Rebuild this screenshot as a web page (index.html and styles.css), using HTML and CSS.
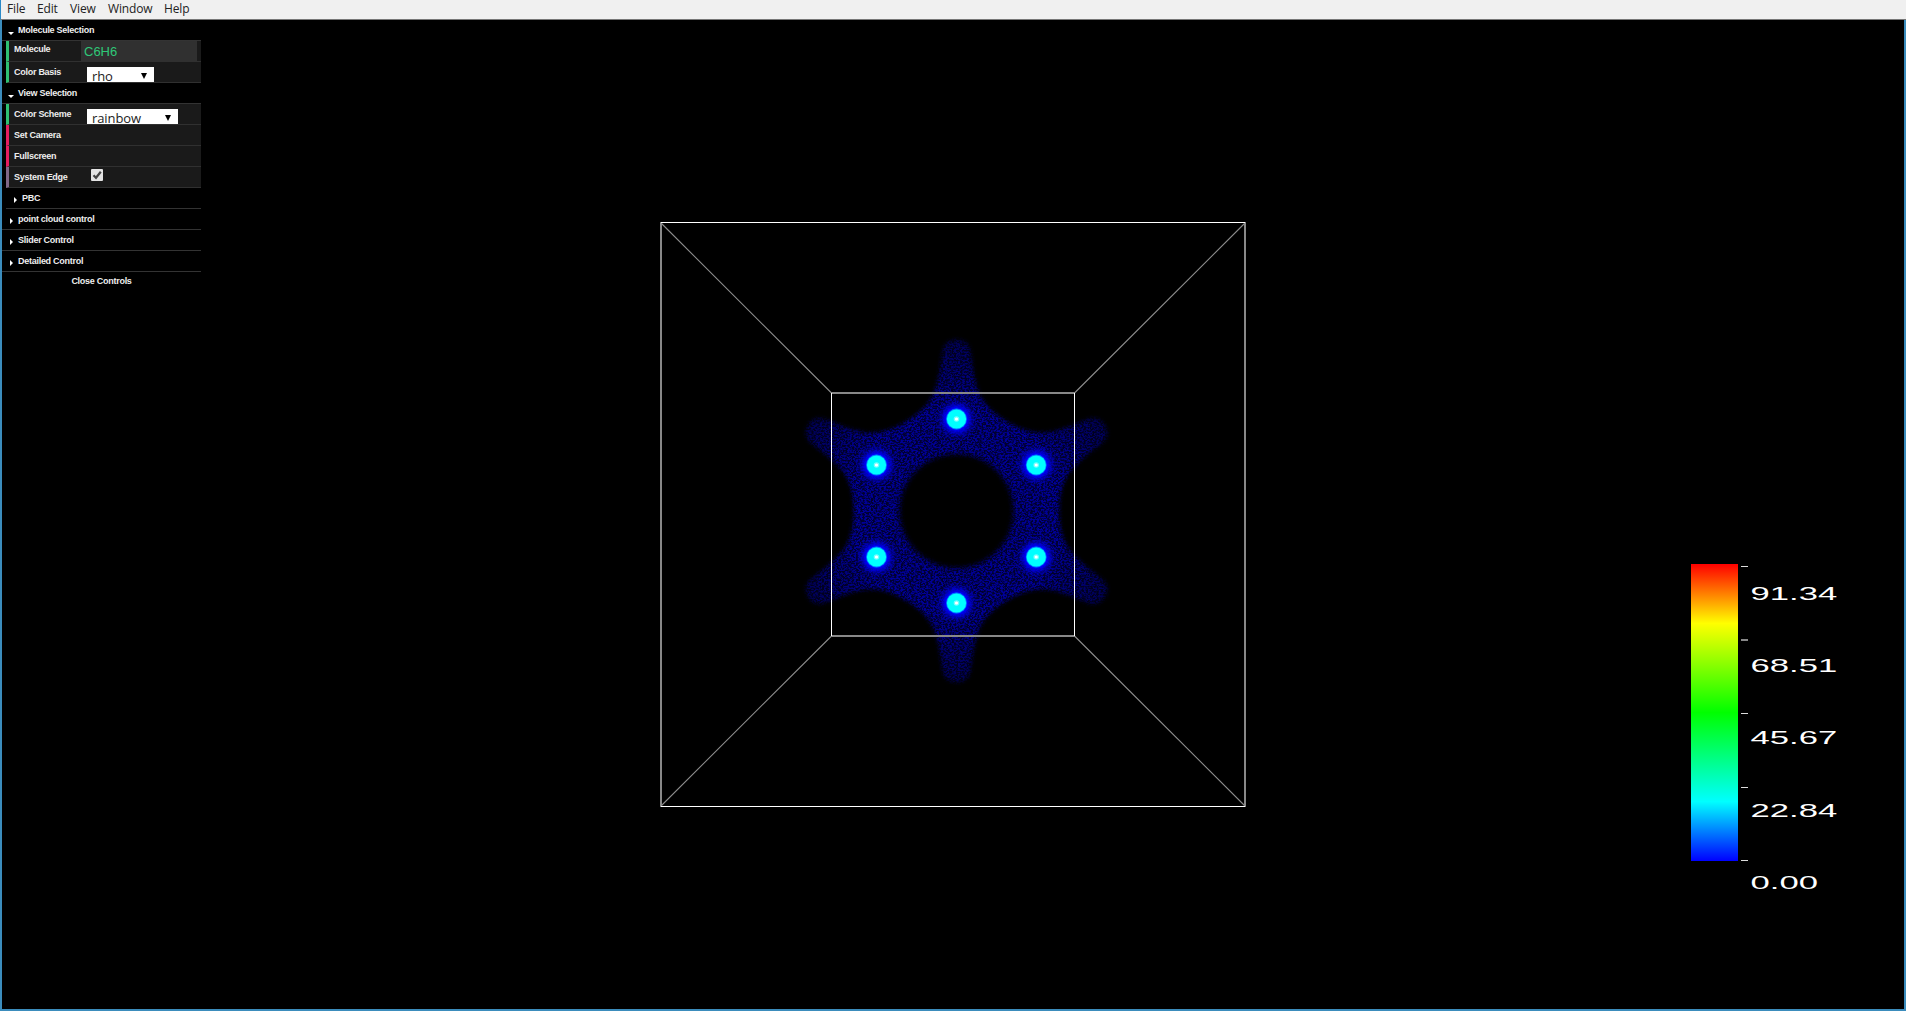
FILE: index.html
```html
<!DOCTYPE html>
<html lang="en">
<head>
<meta charset="utf-8">
<title>Molecule viewer</title>
<link rel="stylesheet" href="styles.css">
</head>
<body>
<nav class="menubar"><span class="m-file">File</span><span class="m-edit">Edit</span><span class="m-view">View</span><span class="m-window">Window</span><span class="m-help">Help</span></nav>
<main class="viewport">
<svg class="scene" viewBox="0 19 1906 992" width="1906" height="992">
  <defs>
    <linearGradient id="rainbow" x1="0" y1="0" x2="0" y2="1">
      <stop offset="0" stop-color="#f00"/><stop offset=".2" stop-color="#ff0"/><stop offset=".5" stop-color="#0f0"/><stop offset=".8" stop-color="#0ff"/><stop offset="1" stop-color="#00f"/>
    </linearGradient>
    <radialGradient id="density" gradientUnits="userSpaceOnUse" cx="0" cy="0" r="172">
      <stop offset=".3" stop-color="#00005c"/><stop offset=".6" stop-color="#000060"/><stop offset=".8" stop-color="#000048"/><stop offset="1" stop-color="#000034"/>
    </radialGradient>
    <radialGradient id="glow">
      <stop offset=".4" stop-color="#0028ff"/><stop offset=".52" stop-color="#0000ff" stop-opacity=".95"/><stop offset=".68" stop-color="#0000e8" stop-opacity=".6"/><stop offset=".84" stop-color="#0000c0" stop-opacity=".25"/><stop offset="1" stop-color="#0000a0" stop-opacity="0"/>
    </radialGradient>
    <filter id="grain" filterUnits="userSpaceOnUse" x="-190" y="-190" width="380" height="380" color-interpolation-filters="sRGB">
      <feGaussianBlur in="SourceGraphic" stdDeviation="2.4" result="soft"/>
      <feTurbulence type="fractalNoise" baseFrequency=".47 .61" numOctaves="3" seed="7"/>
      <feColorMatrix values="0 0 0 0 0  0 0 0 0 0  0 0 4.5 0 -1.75  0 0 0 0 1" result="noise"/>
      <feComposite in="soft" in2="noise" operator="arithmetic" k1="1.1" k2=".5" result="mix"/>
      <feComposite in="mix" in2="soft" operator="in"/>
    </filter>
    <path id="arm" d="M0 0L-54 -89C-38 -98 -28 -108 -23 -121C-18 -136 -17 -150 -15 -162Q-12 -173 0 -173Q12 -173 15 -162C17 -150 18 -136 23 -121C28 -108 38 -98 54 -89Z"/>
    <g id="atom"><circle r="21" fill="url(#glow)"/><circle r="10.4" fill="#0080ff"/><circle r="9.6" fill="#0ff"/><circle r="2.8" fill="#70ffff"/><circle r="1.6" fill="#fff"/></g>
  </defs>
  <g transform="translate(956.5 511)">
    <g filter="url(#grain)"><g fill="url(#density)">
      <use href="#arm"/><use href="#arm" transform="rotate(60)"/><use href="#arm" transform="rotate(120)"/><use href="#arm" transform="rotate(180)"/><use href="#arm" transform="rotate(240)"/><use href="#arm" transform="rotate(300)"/></g>
      <circle r="57" fill="#000"/>
    </g>
    <use href="#atom" y="-92"/><use href="#atom" x="79.7" y="-46"/><use href="#atom" x="79.7" y="46"/><use href="#atom" y="92"/><use href="#atom" x="-80" y="46"/><use href="#atom" x="-80" y="-46"/>
  </g>
  <g stroke="#8c8c8c" stroke-width="1.1">
    <path d="M661 223L831.5 393M1245 223L1074.5 393M661 806L831.5 636M1245 806L1074.5 636"/>
  </g>
  <g fill="none">
    <path stroke="#888" stroke-width="2" d="M831 393H1075M831 636H1075M661 222V807M1245 222V807"/>
    <path stroke="#fff" d="M831.5 393V636M1074.5 393V636M661 222.5H1245M661 806.5H1245"/>
  </g>
  <rect x="1691" y="564" width="47" height="297" fill="url(#rainbow)"/>
  <path stroke="#ddd" d="M1741 566.5h7M1741 713.5h7M1741 787.5h7M1741 860.5h7"/>
  <path stroke="#888" stroke-width="2" d="M1741 640h7"/>
  <g class="scale">
    <text transform="translate(1750.5 600) scale(1.98 1)">91.34</text>
    <text transform="translate(1750.5 672) scale(1.98 1)">68.51</text>
    <text transform="translate(1750.5 744.3) scale(1.98 1)">45.67</text>
    <text transform="translate(1750.5 816.5) scale(1.98 1)">22.84</text>
    <text transform="translate(1750.5 888.7) scale(1.98 1)">0.00</text>
  </g>
</svg>
<aside class="panel">
  <div class="title open">Molecule Selection</div>
  <div class="row value"><span class="name">Molecule</span><span class="field">C6H6</span></div>
  <div class="row value"><span class="name">Color Basis</span><span class="select basis">rho<i></i></span></div>
  <div class="title open">View Selection</div>
  <div class="row value"><span class="name">Color Scheme</span><span class="select scheme">rainbow<i></i></span></div>
  <div class="row action"><span class="name">Set Camera</span></div>
  <div class="row action"><span class="name">Fullscreen</span></div>
  <div class="row toggle"><span class="name">System Edge</span><svg class="check" viewBox="0 0 12 12"><path d="M2.5 6.2L5 8.8L9.8 2.8" fill="none" stroke="#444" stroke-width="2.2"/></svg></div>
  <div class="title nested">PBC</div>
  <div class="title">point cloud control</div>
  <div class="title">Slider Control</div>
  <div class="title">Detailed Control</div>
  <div class="close">Close Controls</div>
</aside>
</main>
</body>
</html>
```
FILE: styles.css
```css
* { box-sizing: border-box; }
body { margin: 0; height: 1011px; overflow: hidden; background: #000; }
.menubar { height: 20px; display: flex; background: #f0f0f0; border-bottom: 1px solid #777; border-left: 1px solid #2a8ac8; padding-left: 6px; font: 12px/17px "Open Sans", sans-serif; letter-spacing: -.15px; color: #222; }
.m-file { width: 30px; }
.m-edit { width: 33px; }
.m-view { width: 38px; }
.m-window { width: 56px; }
.viewport { display: grid; height: 991px; position: relative; }
.viewport::after { content: ""; position: absolute; inset: 0; border: 2px solid #3b8cbc; border-top: 0; }
.scene, .panel { grid-area: 1 / 1; }
.scene { display: block; margin-top: -1px; }
.scale { font: 17.5px "Liberation Sans", Arial, sans-serif; fill: #fff; }
.panel { position: relative; width: 201px; padding-left: 2px; font: bold 9px/20px "Liberation Sans", Arial, sans-serif; letter-spacing: -.27px; color: #eee; }
.title { height: 21px; padding-left: 16px; border-bottom: 1px solid #333; background: #000; position: relative; line-height: 20px; }
.title::before { content: ""; position: absolute; left: 8px; top: 9px; border: 3px solid transparent; border-left-color: #fff; border-right: 0; }
.title.open { line-height: 21px; }
.title.open::before { left: 6px; top: 12px; border: 3px solid transparent; border-top-color: #fff; border-bottom: 0; }
.nested { margin-left: 4px; }
.row { height: 21px; margin-left: 4px; display: flex; background: #1a1a1a; border-bottom: 1px solid #303030; border-left: 3px solid #2fc071; overflow: hidden; }
.action { border-left-color: #e61d5f; }
.toggle { border-left-color: #806787; }
.name { width: 72px; padding-left: 5px; line-height: 21px; white-space: nowrap; }
.value .name { line-height: 17px; }
.value:nth-child(3) .name, .value:nth-child(5) .name { line-height: 20px; }
.field { width: 116px; background: #303030; color: #2fc878; padding-left: 3px; font-weight: normal; font-size: 13px; line-height: 21px; letter-spacing: 0; }
.select { height: 15px; margin: 5px 0 0 6px; padding-left: 5px; background: #fff; color: #222; font: 13px/18px "Open Sans", sans-serif; letter-spacing: -.1px; display: flex; justify-content: space-between; }
.select i { margin: 6px 7px 0 0; width: 0; height: 0; border: 3px solid transparent; border-top: 6px solid #000; border-bottom: 0; }
.basis { width: 67px; }
.scheme { width: 91px; }
.check { width: 12px; height: 12px; margin: 2px 0 0 10px; background: #e4e4e4; border-radius: 1px; }
.close { height: 18px; text-align: center; line-height: 18px; }
```
